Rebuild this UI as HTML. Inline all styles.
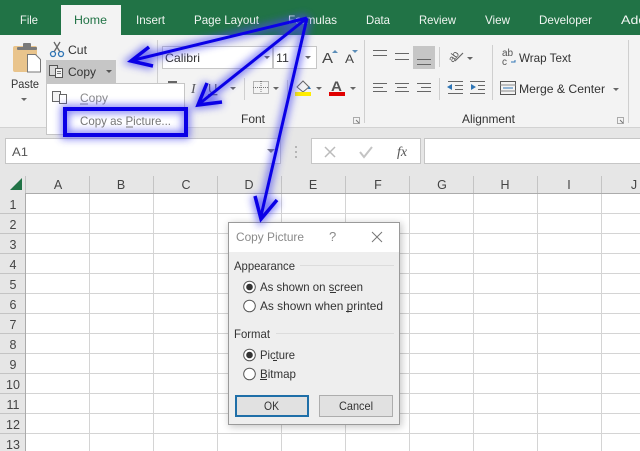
<!DOCTYPE html>
<html><head><meta charset="utf-8"><style>
html,body{margin:0;padding:0;background:#fff;width:640px;height:451px;overflow:hidden}
svg{display:block}
text{font-family:"Liberation Sans",sans-serif;font-size:12px;fill:#333}
.t{fill:#f0f5f1}
.g{fill:#8a8a8a}
.h{fill:#444;font-size:12.5px}
</style></head><body>
<svg width="640" height="451" viewBox="0 0 640 451" xmlns="http://www.w3.org/2000/svg">
<defs>
<filter id="glow" x="-30%" y="-30%" width="160%" height="160%"><feGaussianBlur stdDeviation="4"/></filter>
</defs>
<!-- tab bar -->
<rect width="640" height="35" fill="#217346"/>
<rect x="61" y="5" width="60" height="30" fill="#f3f3f3"/>
<text x="20" y="24" class="t" textLength="18" lengthAdjust="spacingAndGlyphs">File</text>
<text x="74" y="24" style="fill:#217346" textLength="33" lengthAdjust="spacingAndGlyphs">Home</text>
<text x="136" y="24" class="t" textLength="29" lengthAdjust="spacingAndGlyphs">Insert</text>
<text x="194" y="24" class="t" textLength="65" lengthAdjust="spacingAndGlyphs">Page Layout</text>
<text x="288" y="24" class="t" textLength="49" lengthAdjust="spacingAndGlyphs">Formulas</text>
<text x="366" y="24" class="t" textLength="24" lengthAdjust="spacingAndGlyphs">Data</text>
<text x="419" y="24" class="t" textLength="37" lengthAdjust="spacingAndGlyphs">Review</text>
<text x="485" y="24" class="t" textLength="25" lengthAdjust="spacingAndGlyphs">View</text>
<text x="539" y="24" class="t" textLength="53" lengthAdjust="spacingAndGlyphs">Developer</text>
<text x="621" y="24" class="t" textLength="30" lengthAdjust="spacingAndGlyphs">Add-</text>
<!-- ribbon -->
<rect y="35" width="640" height="92" fill="#f3f3f3"/>
<rect y="127" width="640" height="66" fill="#e6e6e6"/>
<rect y="127" width="640" height="1" fill="#d2d2d2"/>
<g fill="#cfcfcf">
<rect x="157" y="40" width="1" height="83"/>
<rect x="364" y="40" width="1" height="83"/>
<rect x="628" y="40" width="1" height="83"/>
<rect x="439" y="47" width="1" height="20"/>
<rect x="439" y="78" width="1" height="22"/>
<rect x="492" y="45" width="1" height="55"/>
<rect x="287" y="80" width="1" height="20"/>
<rect x="244" y="78" width="1" height="22"/>
</g>
<!-- Paste -->
<rect x="13" y="46" width="24" height="26" rx="2" fill="#e9c48c"/>
<rect x="17" y="47" width="20" height="3" rx="1" fill="#7a7a7a"/>
<rect x="23" y="43" width="8" height="5" rx="1" fill="#7a7a7a"/>
<path d="M27.500 54.500h8l5 5v12.500h-13z" fill="#fff" stroke="#777"/>
<text x="11" y="88" textLength="28" lengthAdjust="spacingAndGlyphs">Paste</text>
<path d="M21 98h6l-3 3z" fill="#666"/>
<!-- Cut -->
<path d="M60 42l-6 10M54 42l6 10" stroke="#666" stroke-width="1.300" fill="none"/>
<circle cx="53" cy="54" r="2.500" fill="none" stroke="#2f75b5" stroke-width="1.300"/>
<circle cx="61" cy="54" r="2.500" fill="none" stroke="#2f75b5" stroke-width="1.300"/>
<text x="68" y="54" textLength="19" lengthAdjust="spacingAndGlyphs">Cut</text>
<!-- Copy button -->
<rect x="46" y="60" width="70" height="24" fill="#c6c6c6"/>
<path d="M49.500 65.500h8v10h-8z" fill="#d8d8d8" stroke="#555"/>
<path d="M55.500 68.500h7v9h-7z" fill="#f3f3f3" stroke="#555"/>
<path d="M57 71.500h4M57 73.500h4" stroke="#777"/>
<text x="68" y="76" textLength="28" lengthAdjust="spacingAndGlyphs">Copy</text>
<path d="M106 70h6l-3 3z" fill="#555"/>
<!-- Font group -->
<rect x="162.500" y="46.500" width="110" height="22" fill="#fff" stroke="#c6c6c6"/>
<rect x="273.500" y="46.500" width="43" height="22" fill="#fff" stroke="#c6c6c6"/>
<text x="165" y="62" textLength="35" lengthAdjust="spacingAndGlyphs">Calibri</text>
<text x="276" y="62" textLength="13" lengthAdjust="spacingAndGlyphs">11</text>
<path d="M264 56h6l-3 3zM305 56h6l-3 3z" fill="#666"/>
<text x="322" y="63" style="font-size:15px;fill:#444" textLength="11" lengthAdjust="spacingAndGlyphs">A</text>
<path d="M332 53l3-3 3 3z" fill="#5b8db8"/>
<text x="345" y="63" style="font-size:12px;fill:#444" textLength="9" lengthAdjust="spacingAndGlyphs">A</text>
<path d="M352 50h6l-3 3z" fill="#5b8db8"/>
<rect x="168" y="81" width="9" height="2" fill="#666"/>
<text x="191" y="93" style="font-family:'Liberation Serif';font-style:italic;font-size:14px;fill:#555">I</text>
<text x="208" y="93" style="font-size:13px;text-decoration:underline;fill:#555">U</text>
<path d="M230 87h6l-3 3z" fill="#666"/>
<rect x="253.500" y="81.500" width="15" height="12" fill="none" stroke="#777" stroke-dasharray="1 1"/>
<path d="M261 81v13M253 87.500h15" stroke="#777" stroke-dasharray="1 1"/>
<path d="M273 87h6l-3 3z" fill="#666"/>
<path d="M297 87l6-6 6 6-6 5z" fill="#f3f3f3" stroke="#666"/>
<path d="M309 86l2 3h-3z" fill="#2f75b5"/>
<rect x="295" y="92" width="16" height="4" fill="#ffec00"/>
<path d="M316 87h6l-3 3z" fill="#666"/>
<text x="331" y="91" style="font-size:14px;font-weight:bold;fill:#555" textLength="11" lengthAdjust="spacingAndGlyphs">A</text>
<rect x="329" y="92" width="16" height="4" fill="#e00000"/>
<path d="M350 87h6l-3 3z" fill="#666"/>
<text x="241" y="123" textLength="24" lengthAdjust="spacingAndGlyphs">Font</text>
<path d="M353.500 117.500h6v6h-6z" fill="none" stroke="#aaa"/>
<path d="M356 120l3 3" stroke="#777"/>
<!-- Alignment -->
<rect x="413" y="46" width="22" height="23" fill="#c6c6c6"/>
<g stroke="#666" stroke-width="1" fill="none">
<path d="M373 50.500h14M373 55.500h14"/>
<path d="M395 53.500h14M395 59.500h14"/>
<path d="M417 59.500h14M417 64.500h14"/>
<path d="M373 83.500h14M373 87.500h10M373 91.500h14"/>
<path d="M395 83.500h14M397 87.500h10M395 91.500h14"/>
<path d="M417 83.500h14M421 87.500h10M417 91.500h14"/>
<path d="M448 81.500h15M455 85.500h8M455 89.500h8M448 93.500h15"/>
<path d="M470 81.500h15M478 85.500h7M478 89.500h7M470 93.500h15"/>
</g>
<path d="M447 87l5-3v6zM476 87l-5-3v6z" fill="#2f75b5"/>
<text transform="translate(453,63) rotate(-55)" style="font-size:10px;fill:#555">ab</text>
<path d="M455 61l8-8" stroke="#666" stroke-width="1.200" fill="none"/>
<path d="M467 57h6l-3 3z" fill="#666"/>
<text x="502" y="56" style="font-size:10px;fill:#555">ab</text>
<text x="502" y="65" style="font-size:10px;fill:#555">c</text>
<path d="M511 62h4v-2" stroke="#2f75b5" fill="none"/>
<text x="519" y="62" textLength="52" lengthAdjust="spacingAndGlyphs">Wrap Text</text>
<rect x="500.500" y="81.500" width="15" height="13" fill="#f3f3f3" stroke="#555"/>
<path d="M503 88h10" stroke="#2f75b5"/>
<path d="M500 85h16M500 91h16" stroke="#888"/>
<text x="519" y="93" textLength="86" lengthAdjust="spacingAndGlyphs">Merge &amp; Center</text>
<path d="M613 88h6l-3 3z" fill="#666"/>
<text x="462" y="123" textLength="53" lengthAdjust="spacingAndGlyphs">Alignment</text>
<path d="M617.500 117.500h6v6h-6z" fill="none" stroke="#aaa"/>
<path d="M620 120l3 3" stroke="#777"/>
<!-- Dropdown menu -->
<rect x="46.500" y="83.500" width="138" height="51" fill="#fff" stroke="#c6c6c6"/>
<path d="M52.500 91.500h8v10h-8z" fill="#f3f3f3" stroke="#666"/>
<path d="M59.500 94.500h7v9h-7z" fill="#fff" stroke="#666"/>
<text x="80" y="102" class="g" textLength="28" lengthAdjust="spacingAndGlyphs">Copy</text>
<path d="M80 104h8" stroke="#8a8a8a"/>
<!-- Formula bar -->
<rect x="5.500" y="138.500" width="275" height="25" fill="#fff" stroke="#c6c6c6"/>
<text x="12" y="156" textLength="16" lengthAdjust="spacingAndGlyphs" style="fill:#555">A1</text>
<path d="M267 149h8l-4 4z" fill="#777"/>
<g fill="#b5b5b5"><rect x="295" y="146" width="2" height="2"/><rect x="295" y="151" width="2" height="2"/><rect x="295" y="156" width="2" height="2"/></g>
<rect x="311.500" y="138.500" width="109" height="25" fill="#fff" stroke="#c6c6c6"/>
<rect x="424.500" y="138.500" width="220" height="25" fill="#fff" stroke="#c6c6c6"/>
<path d="M325 147l10 10M335 147l-10 10" stroke="#bbb" stroke-width="1.500"/>
<path d="M360 152l4 5 8-10" stroke="#c4c4c4" stroke-width="2" fill="none"/>
<text x="397" y="156" style="font-family:'Liberation Serif';font-style:italic;font-size:14px;fill:#555">fx</text>
<!-- Grid -->
<rect y="193" width="25" height="258" fill="#e6e6e6"/>
<path d="M10 190l12-12v12z" fill="#217346"/>
<g stroke="#d4d4d4">
<path d="M25 213.500H640M25 233.500H640M25 253.500H640M25 273.500H640M25 293.500H640M25 313.500H640M25 333.500H640M25 353.500H640M25 373.500H640M25 393.500H640M25 413.500H640M25 433.500H640"/>
<path d="M89.500 193V451M153.500 193V451M217.500 193V451M281.500 193V451M345.500 193V451M409.500 193V451M473.500 193V451M537.500 193V451M601.500 193V451"/>
</g>
<g stroke="#c4c4c4">
<path d="M0 213.500H25M0 233.500H25M0 253.500H25M0 273.500H25M0 293.500H25M0 313.500H25M0 333.500H25M0 353.500H25M0 373.500H25M0 393.500H25M0 413.500H25M0 433.500H25"/>
<path d="M25.500 176V193M89.500 176V193M153.500 176V193M217.500 176V193M281.500 176V193M345.500 176V193M409.500 176V193M473.500 176V193M537.500 176V193M601.500 176V193"/>
</g>
<path d="M25 193.500H640M25.500 193V451" stroke="#ababab"/>
<g text-anchor="middle" class="h">
<text x="58" y="189" class="h">A</text><text x="121" y="189" class="h">B</text><text x="186" y="189" class="h">C</text><text x="249" y="189" class="h">D</text><text x="313" y="189" class="h">E</text><text x="378" y="189" class="h">F</text><text x="442" y="189" class="h">G</text><text x="505" y="189" class="h">H</text><text x="569" y="189" class="h">I</text><text x="634" y="189" class="h">J</text>
<text x="13" y="209" class="h">1</text><text x="13" y="229" class="h">2</text><text x="13" y="249" class="h">3</text><text x="13" y="269" class="h">4</text><text x="13" y="289" class="h">5</text><text x="13" y="309" class="h">6</text><text x="13" y="329" class="h">7</text><text x="13" y="349" class="h">8</text><text x="13" y="369" class="h">9</text><text x="13" y="389" class="h">10</text><text x="13" y="409" class="h">11</text><text x="13" y="429" class="h">12</text><text x="13" y="449" class="h">13</text>
</g>
<!-- Dialog -->
<rect x="229" y="223" width="173" height="204" fill="#000" opacity=".22" filter="url(#glow)"/>
<rect x="228.500" y="222.500" width="171" height="202" fill="#eeeeee" stroke="#9a9a9a"/>
<rect x="229" y="223" width="170" height="29" fill="#fff"/>
<text x="236" y="241" class="g" textLength="68" lengthAdjust="spacingAndGlyphs">Copy Picture</text>
<text x="329" y="241" class="g" style="font-size:13px">?</text>
<path d="M372 232l10 10M382 232l-10 10" stroke="#777" fill="none"/>
<text x="234" y="270" textLength="61" lengthAdjust="spacingAndGlyphs">Appearance</text>
<path d="M300 265.500H394M276 333.500H394" stroke="#dcdcdc"/>
<text x="234" y="338" textLength="36" lengthAdjust="spacingAndGlyphs">Format</text>
<g fill="#fff" stroke="#555">
<circle cx="249.500" cy="287" r="5.800"/><circle cx="249.500" cy="306" r="5.800"/><circle cx="249.500" cy="355" r="5.800"/><circle cx="249.500" cy="374" r="5.800"/>
</g>
<circle cx="249.500" cy="287" r="3.300" fill="#333"/><circle cx="249.500" cy="355" r="3.300" fill="#333"/>
<text x="260" y="291" textLength="103" lengthAdjust="spacingAndGlyphs">As shown on screen</text>
<path d="M330 292.500h6" stroke="#333"/>
<text x="260" y="310" textLength="123" lengthAdjust="spacingAndGlyphs">As shown when printed</text>
<path d="M346 311.500h6" stroke="#333"/>
<text x="260" y="359" textLength="35" lengthAdjust="spacingAndGlyphs">Picture</text>
<path d="M273 360.500h4" stroke="#333"/>
<text x="260" y="378" textLength="36" lengthAdjust="spacingAndGlyphs">Bitmap</text>
<path d="M260 379.500h7" stroke="#333"/>
<rect x="236" y="396" width="72" height="20" fill="#e1e1e1" stroke="#1f6fa8" stroke-width="2"/>
<text x="264" y="410" textLength="15" lengthAdjust="spacingAndGlyphs">OK</text>
<rect x="319.500" y="395.500" width="73" height="21" fill="#e1e1e1" stroke="#adadad"/>
<text x="339" y="410" textLength="34" lengthAdjust="spacingAndGlyphs">Cancel</text>
<!-- Arrow glow -->
<g stroke="#4a4af0" stroke-width="8" fill="none" opacity=".7" filter="url(#glow)">
<path d="M307 18L134 60M307 18L199 104M307 18L261 216M149 47L131 61L153 66M207 83L198 105L222 102M255 196L261 219L277 200"/>
<rect x="65" y="109" width="121" height="26"/>
</g>
<text x="80" y="125" style="fill:#777" textLength="91" lengthAdjust="spacingAndGlyphs">Copy as Picture...</text>
<path d="M126 127h7" stroke="#777"/>
<!-- Arrows -->
<g stroke="#0a00e6" stroke-width="3" fill="none">
<path d="M307 18L134 60M307 18L199 104M307 18L261 216"/>
<path d="M149 47L131 61L153 66M207 83L198 105L222 102M255 196L261 219L277 200" stroke-width="3.500"/>
<rect x="65" y="109" width="121" height="26" stroke-width="4"/>
</g>
</svg>
</body></html>
